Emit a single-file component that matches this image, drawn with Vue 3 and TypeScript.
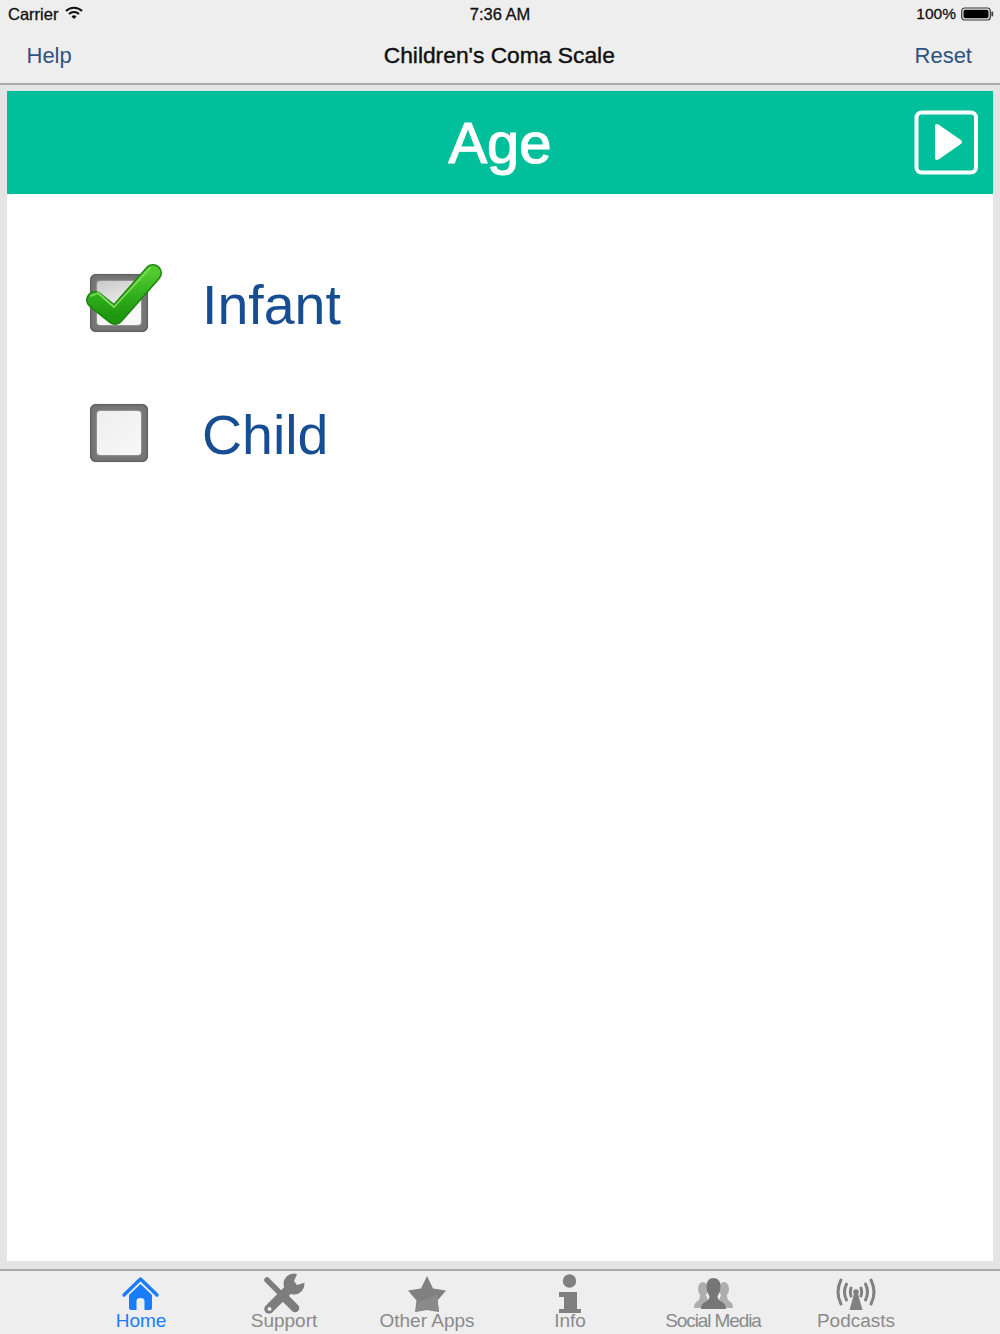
<script setup lang="ts">
import { ref } from 'vue'

interface Tab {
  label: string
  icon: string
}

const age = ref('infant')

const options = [
  { id: 'infant', label: 'Infant' },
  { id: 'child', label: 'Child' }
]

const tabs: Tab[] = [
  { label: 'Home', icon: 'home' },
  { label: 'Support', icon: 'support' },
  { label: 'Other Apps', icon: 'star' },
  { label: 'Info', icon: 'info' },
  { label: 'Social Media', icon: 'social' },
  { label: 'Podcasts', icon: 'podcast' }
]
</script>

<template>
  <div class="screen">
    <header class="top">
      <div class="status">
        <div class="status-left">
          <span>Carrier</span>
          <svg class="wifi" width="18" height="14" viewBox="0 0 18 14">
            <path d="M1 5 A11.5 11.5 0 0 1 17 5" fill="none" stroke="#111" stroke-width="2" />
            <path d="M4 8 A7.2 7.2 0 0 1 14 8" fill="none" stroke="#111" stroke-width="2" />
            <path d="M6.5 10.4 A3.6 3.6 0 0 1 11.5 10.4 L9 13 Z" fill="#111" />
          </svg>
        </div>
        <span class="time">7:36 AM</span>
        <div class="status-right">
          <span>100%</span>
          <svg width="33" height="14" viewBox="0 0 33 14">
            <rect x="0.7" y="1" width="28.6" height="12" rx="3" fill="none" stroke="#333" stroke-width="1.2" />
            <rect x="2.5" y="2.8" width="25" height="8.4" rx="1.6" fill="#000" />
            <rect x="30.4" y="4.5" width="1.8" height="5" rx="0.8" fill="#444" />
          </svg>
        </div>
      </div>
      <nav class="nav">
        <span class="nav-btn">Help</span>
        <span class="nav-title">Children's Coma Scale</span>
        <span class="nav-btn reset">Reset</span>
      </nav>
    </header>

    <main class="page">
      <section class="card">
        <div class="banner">
          <h1>Age</h1>
          <svg class="next" width="66" height="66" viewBox="0 0 66 66">
            <rect x="3.5" y="2.5" width="59.5" height="60" rx="5" fill="none" stroke="#fff" stroke-width="4" />
            <path d="M24 16 L47 32 L24 48 Z" fill="#fff" stroke="#fff" stroke-width="4" stroke-linejoin="round" />
          </svg>
        </div>

        <div class="options">
          <div v-for="opt in options" :key="opt.id" class="option" @click="age = opt.id">
            <div class="box-wrap">
              <div class="box">
                <div class="box-inner" :class="{ shaded: age === opt.id }"></div>
              </div>
              <svg v-if="age === opt.id" class="tick" width="84" height="66" viewBox="0 0 84 66">
                <defs>
                  <linearGradient id="tickFill" x1="0" y1="0" x2="0" y2="1">
                    <stop offset="0" stop-color="#52c92f" />
                    <stop offset="0.55" stop-color="#2fae1a" />
                    <stop offset="1" stop-color="#1f960f" />
                  </linearGradient>
                </defs>
                <path d="M12 38 L32 54 L70 11" fill="none" stroke="#1b850e" stroke-width="18" stroke-linecap="round" stroke-linejoin="round" />
                <path d="M12 38 L32 54 L70 11" fill="none" stroke="url(#tickFill)" stroke-width="15" stroke-linecap="round" stroke-linejoin="round" />
                <path d="M8 34 L15 31 L31 45 L67 6" fill="none" stroke="#7fdc5c" stroke-width="1.8" stroke-linecap="round" stroke-linejoin="round" />
              </svg>
            </div>
            <span class="opt-label">{{ opt.label }}</span>
          </div>
        </div>
      </section>
    </main>

    <footer class="tabbar">
      <div v-for="(tab, i) in tabs" :key="tab.label" class="tab" :class="{ active: i === 0 }">
        <svg class="tab-icon" width="52" height="42" viewBox="0 0 52 42">
          <g v-if="tab.icon === 'home'">
            <path d="M9 23 L25.500 7 L42 23" fill="none" stroke="#1a7cfb" stroke-width="3.4" stroke-linecap="round" stroke-linejoin="round" />
            <path fill-rule="evenodd" d="M14 23 L25.500 12 L37 23 V36 Q37 38 35 38 H16 Q14 38 14 36 Z M21.500 38 H29.500 V29 Q29.500 26 25.500 26 Q21.500 26 21.500 29 Z" fill="#1a7cfb" />
          </g>
          <g v-else-if="tab.icon === 'support'">
            <path d="M11 37 L33 15" fill="none" stroke="#7d7d7d" stroke-width="9.500" stroke-linecap="round" />
            <circle cx="36" cy="12" r="10.500" fill="#7d7d7d" />
            <path d="M40 0 L36 9 L39 13 L49 10 L49 0 Z" fill="#eeeeee" />
            <path d="M9 8 L24 23" fill="none" stroke="#7d7d7d" stroke-width="5.500" stroke-linecap="round" />
            <path d="M26 25 L37 36" fill="none" stroke="#7d7d7d" stroke-width="8.500" stroke-linecap="round" />
            <circle cx="11.500" cy="37" r="2" fill="#eeeeee" />
          </g>
          <g v-else-if="tab.icon === 'star'">
            <path d="M26 4 L32 16.5 L45 18.5 L36.5 28.5 L38 40 L26 38 L14 40 L15.5 28.5 L7 18.5 L20 16.5 Z" fill="#808080" />
            <path d="M15 39.5 L16 31 L37 22 L36.5 28.5 L38 39.5 L26 37.5 Z" fill="#8a8a8a" />
          </g>
          <g v-else-if="tab.icon === 'info'">
            <circle cx="25.500" cy="9" r="6.700" fill="#808080" />
            <path d="M15 20 H33 V37 H37 V41 H15 V37 H20 V25 H15 Z" fill="#808080" />
          </g>
          <g v-else-if="tab.icon === 'social'">
            <ellipse cx="16" cy="17" rx="5" ry="7" fill="#aeaeae" />
            <ellipse cx="37" cy="17" rx="5" ry="7" fill="#aeaeae" />
            <path d="M13 23 H19 L24 36 H7 Q7 31 10 29.5 Q13 28 13 23 Z" fill="#aeaeae" />
            <path d="M34 23 H40 Q40 28 43 29.5 Q46 31 46 36 H29 Z" fill="#aeaeae" />
            <path d="M26.5 6 Q33 6 33.5 14 Q33.5 20 30.5 24 Q30.5 28 35 30 Q39 32 39 37 H14 Q14 32 18 30 Q22.5 28 22.5 24 Q19.500 20 19.500 14 Q20 6 26.5 6 Z" fill="#767676" />
          </g>
          <g v-else>
            <g fill="none" stroke="#808080" stroke-width="3" stroke-linecap="round">
              <path d="M11 8 Q5 20 11 32" />
              <path d="M41 8 Q47 20 41 32" />
              <path d="M16.500 12 Q12.500 20 16.500 28" />
              <path d="M35.500 12 Q39.500 20 35.500 28" />
              <path d="M21 16 Q19.500 20 21 24" />
              <path d="M31 16 Q32.500 20 31 24" />
            </g>
            <circle cx="26" cy="20" r="2.800" fill="#808080" />
            <path d="M24 22 H28 L32.500 38 H19.500 Z" fill="#808080" />
          </g>
        </svg>
        <span class="tab-label" :class="{ narrow: tab.icon === 'social' }">{{ tab.label }}</span>
      </div>
    </footer>
  </div>
</template>

<style>
body {
  margin: 0;
  background: #e4e4e4;
}
</style>

<style scoped>
.screen {
  width: 1000px;
  height: 1334px;
  display: flex;
  flex-direction: column;
  overflow: hidden;
  font-family: "Liberation Sans", Arial, sans-serif;
  background: #e4e4e4;
}

.top {
  height: 85px;
  flex: none;
  box-sizing: border-box;
  background: #eeeeee;
  border-bottom: 2px solid #a9a9a9;
}

.status {
  height: 28px;
  display: grid;
  grid-template-columns: 1fr auto 1fr;
  align-items: center;
  padding: 0 8px;
  font-size: 16.5px;
  color: #111;
  -webkit-text-stroke: 0.3px #111;
}

.status-left {
  display: flex;
  align-items: center;
  gap: 7px;
}

.wifi {
  margin-top: -2px;
}

.status-right {
  display: flex;
  align-items: center;
  justify-content: flex-end;
  gap: 5px;
  margin-right: -2px;
  font-size: 15.5px;
}

.nav {
  height: 55px;
  display: grid;
  grid-template-columns: 1fr auto 1fr;
  align-items: center;
  padding: 0 28px 2px 26.5px;
}

.nav-btn {
  font-size: 22px;
  color: #2e5380;
}

.reset {
  justify-self: end;
}

.nav-title {
  font-size: 22.8px;
  color: #111;
  -webkit-text-stroke: 0.4px #111;
}

.page {
  flex: 1;
  padding: 6px 7px 8px;
  display: flex;
  min-height: 0;
}

.card {
  flex: 1;
  background: #fff;
}

.banner {
  height: 103px;
  background: #00bf9a;
  display: flex;
  align-items: center;
  justify-content: center;
  position: relative;
}

.banner h1 {
  margin: 0;
  font-size: 58px;
  font-weight: 400;
  color: #fff;
  line-height: 1;
  -webkit-text-stroke: 1.2px #fff;
}

.next {
  position: absolute;
  right: 14px;
  top: 19px;
}

.options {
  display: flex;
  flex-direction: column;
  gap: 70px;
  padding: 80px 0 0 82px;
}

.option {
  display: flex;
  align-items: center;
  gap: 53px;
  height: 60px;
  cursor: pointer;
}

.box-wrap {
  position: relative;
  width: 60px;
  height: 60px;
}

.box {
  box-sizing: border-box;
  width: 58px;
  height: 58px;
  margin-left: 1px;
  padding: 7px;
  border-radius: 6px;
  background: #757575;
  box-shadow: inset 0 0 2px 1px #5a5a5a, 0 0 1px #999;
}

.box-inner {
  height: 100%;
  border-radius: 3px;
  background: linear-gradient(135deg, #eeeeee, #f8f8f8);
  box-shadow: 0 0 2px #d8d8d8;
}

.box-inner.shaded {
  background: linear-gradient(160deg, #c9c9c9, #f8f8f8 75%);
}

.tick {
  position: absolute;
  left: -6px;
  top: -12px;
}

.opt-label {
  padding-top: 3px;
  font-size: 55.5px;
  color: #174d92;
  line-height: 1;
}

.tabbar {
  height: 65px;
  flex: none;
  box-sizing: border-box;
  background: #eeeeee;
  border-top: 2px solid #a9a9a9;
  display: grid;
  grid-template-columns: repeat(6, 143px);
  padding-left: 69.5px;
}

.tab {
  display: flex;
  flex-direction: column;
  align-items: center;
  padding-top: 1px;
  white-space: nowrap;
}

.tab-icon {
  flex: none;
}

.tab-label {
  font-size: 19px;
  line-height: 20px;
  margin-top: -3px;
  color: #8a8a8a;
}

.tab-label.narrow {
  letter-spacing: -1.1px;
}

.tab.active .tab-label {
  color: #1a7cfb;
}
</style>
